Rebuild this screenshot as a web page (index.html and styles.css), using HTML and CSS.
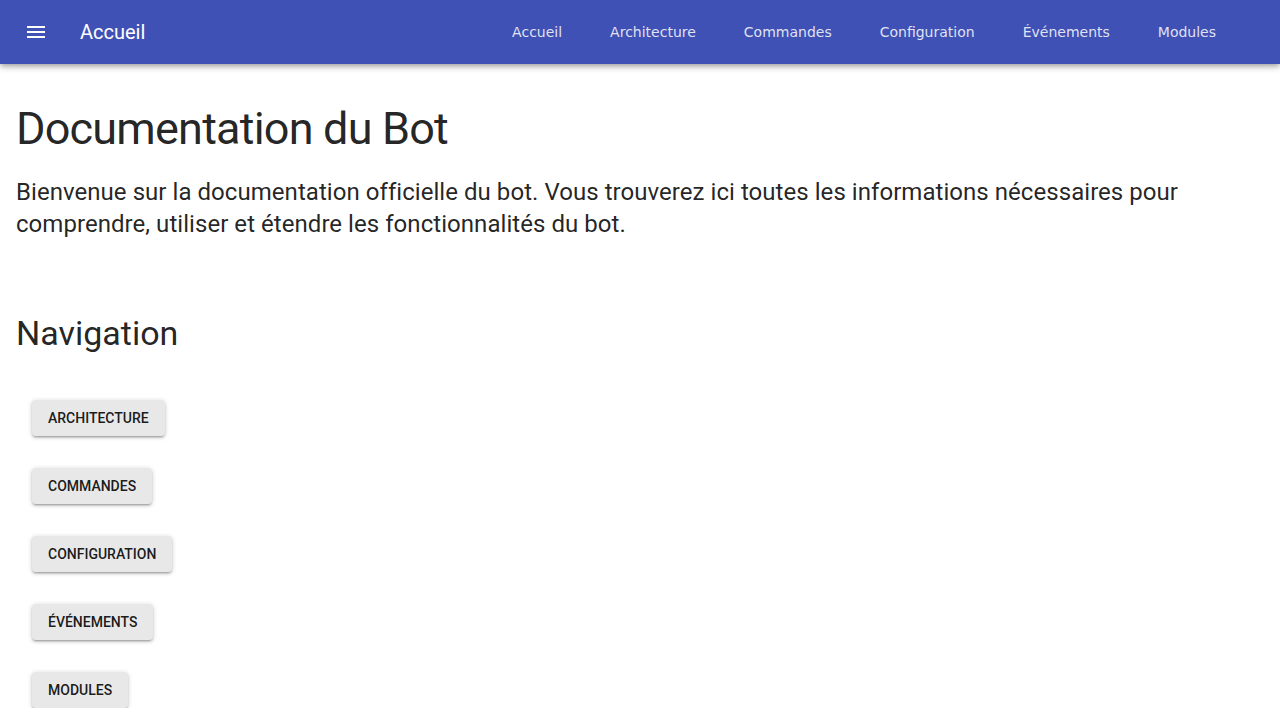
FILE: index.html
```html
<!DOCTYPE html>
<html lang="fr">
<head>
<meta charset="utf-8">
<title>Documentation du Bot</title>
<link rel="stylesheet" href="styles.css">
</head>
<body>
<header class="appbar">
  <button class="menu-btn" aria-label="Menu">
    <svg width="24" height="24" viewBox="0 0 24 24"><path fill="#fff" d="M3 18h18v-2H3v2zm0-5h18v-2H3v2zm0-7v2h18V6H3z"/></svg>
  </button>
  <div class="title">Accueil</div>
  <nav class="links">
    <a href="#">Accueil</a>
    <a href="#">Architecture</a>
    <a href="#">Commandes</a>
    <a href="#">Configuration</a>
    <a href="#">Événements</a>
    <a href="#">Modules</a>
  </nav>
</header>
<main class="content">
  <h1 class="display">Documentation du Bot</h1>
  <p class="lead">Bienvenue sur la documentation officielle du bot. Vous trouverez ici toutes les informations nécessaires pour comprendre, utiliser et étendre les fonctionnalités du bot.</p>
  <h2 class="section">Navigation</h2>
  <div class="buttons">
    <button class="btn">Architecture</button>
    <button class="btn">Commandes</button>
    <button class="btn">Configuration</button>
    <button class="btn">Événements</button>
    <button class="btn">Modules</button>
  </div>
</main>
</body>
</html>
```
FILE: styles.css
```css
html, body {
  margin: 0;
  padding: 0;
  background: #fff;
  font-family: Roboto, "Liberation Sans", sans-serif;
  color: rgba(0, 0, 0, 0.87);
}

.appbar {
  height: 64px;
  background: #3f51b5;
  display: flex;
  align-items: center;
  padding: 0 24px;
  box-sizing: border-box;
  box-shadow: 0px 2px 4px -1px rgba(0,0,0,0.2), 0px 4px 5px 0px rgba(0,0,0,0.14), 0px 1px 10px 0px rgba(0,0,0,0.12);
  position: relative;
  z-index: 2;
}

.menu-btn {
  width: 48px;
  height: 48px;
  margin-left: -12px;
  margin-right: 20px;
  border: 0;
  padding: 0;
  background: transparent;
  display: flex;
  align-items: center;
  justify-content: center;
}

.title {
  color: #fff;
  font-size: 20px;
  font-weight: 400;
  flex: 1;
}

.links {
  display: flex;
  gap: 48px;
  margin-right: 40px;
}

.links a {
  font-family: "DejaVu Sans", sans-serif;
  font-size: 14px;
  color: rgba(255, 255, 255, 0.85);
  text-decoration: none;
}

.content {
  padding: 0 16px;
}

.display {
  font-size: 45px;
  font-weight: 400;
  letter-spacing: -0.8px;
  line-height: 51px;
  margin: 39px 0 22px;
}

.lead {
  font-size: 24px;
  line-height: 32px;
  letter-spacing: 0.05px;
  margin: 0 0 73px;
}

.section {
  font-size: 34px;
  font-weight: 400;
  line-height: 41px;
  margin: 0 0 46px;
}

.buttons {
  display: flex;
  flex-direction: column;
  align-items: flex-start;
  gap: 32px;
  padding-left: 16px;
}

.btn {
  font-family: Roboto, sans-serif;
  font-size: 14px;
  font-weight: 500;
  text-transform: uppercase;
  color: rgba(0, 0, 0, 0.9);
  background: #e8e8e8;
  border: 0;
  border-radius: 4px;
  min-height: 36px;
  min-width: 64px;
  padding: 8px 16px;
  box-shadow: 0px 1px 5px 0px rgba(0,0,0,0.2), 0px 2px 2px 0px rgba(0,0,0,0.14), 0px 3px 1px -2px rgba(0,0,0,0.12);
}
```
